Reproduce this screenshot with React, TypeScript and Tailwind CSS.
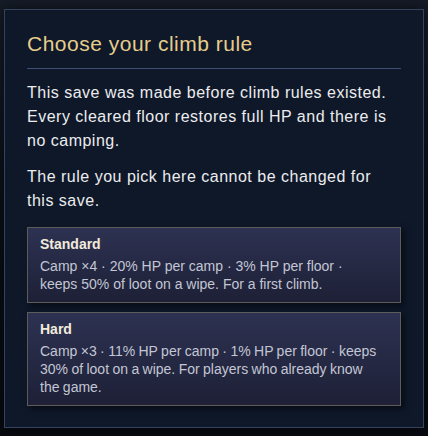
import React from 'react'

const RULES = [
  {
    name: 'Standard',
    desc: 'Camp ×4 · 20% HP per camp · 3% HP per floor · keeps 50% of loot on a wipe. For a first climb.',
    tight: false,
  },
  {
    name: 'Hard',
    desc: 'Camp ×3 · 11% HP per camp · 1% HP per floor · keeps 30% of loot on a wipe. For players who already know the game.',
    tight: true,
  },
]

export default function App() {
  return (
    <div className="w-[428px] h-[436px] overflow-hidden bg-gradient-to-b from-[#161c28] via-[#0a0f18] to-[#070a10] pt-[9px] pl-[4px] font-['Liberation_Sans',Arial,sans-serif]">
      <div className="w-[420px] h-[419px] border border-[#34445f] bg-[#0e1829] px-[22px] pt-[20px] pb-[20px] shadow-[0_0_12px_rgba(0,0,0,0.6)]">
        <h1 className="text-[21px] leading-[28px] tracking-[0.5px] text-[#e6cd8c]">Choose your climb rule</h1>
        <div className="mt-[10px] h-px w-[374px] bg-[#3b5274]" />
        <p className="mt-[12px] text-[16px] leading-[24px] tracking-[0.5px] text-[#ececee]">
          This save was made before climb rules existed. Every cleared floor restores full HP and there is no camping.
        </p>
        <p className="mt-[12px] text-[16px] leading-[24px] tracking-[0.5px] text-[#ececee]">
          The rule you pick here cannot be changed for this save.
        </p>
        <div className="mt-[14px] flex w-[374px] flex-col gap-[9px]">
          {RULES.map(r => (
            <div
              key={r.name}
              className="border border-[#5e5c5a] bg-gradient-to-b from-[#2d3252] to-[#1d2036] pl-[12px] pr-[18px] pt-[7px] pb-[9px] shadow-[3px_3px_6px_rgba(0,0,0,0.5)]"
            >
              <div className="text-[14px] leading-[18px] font-bold text-[#f2ebdc]">{r.name}</div>
              <p className={'mt-[4px] text-[14px] leading-[18px] text-[#c3c6d4] ' + (r.tight ? '[word-spacing:-0.5px]' : '')}>
                {r.desc}
              </p>
            </div>
          ))}
        </div>
      </div>
    </div>
  )
}
